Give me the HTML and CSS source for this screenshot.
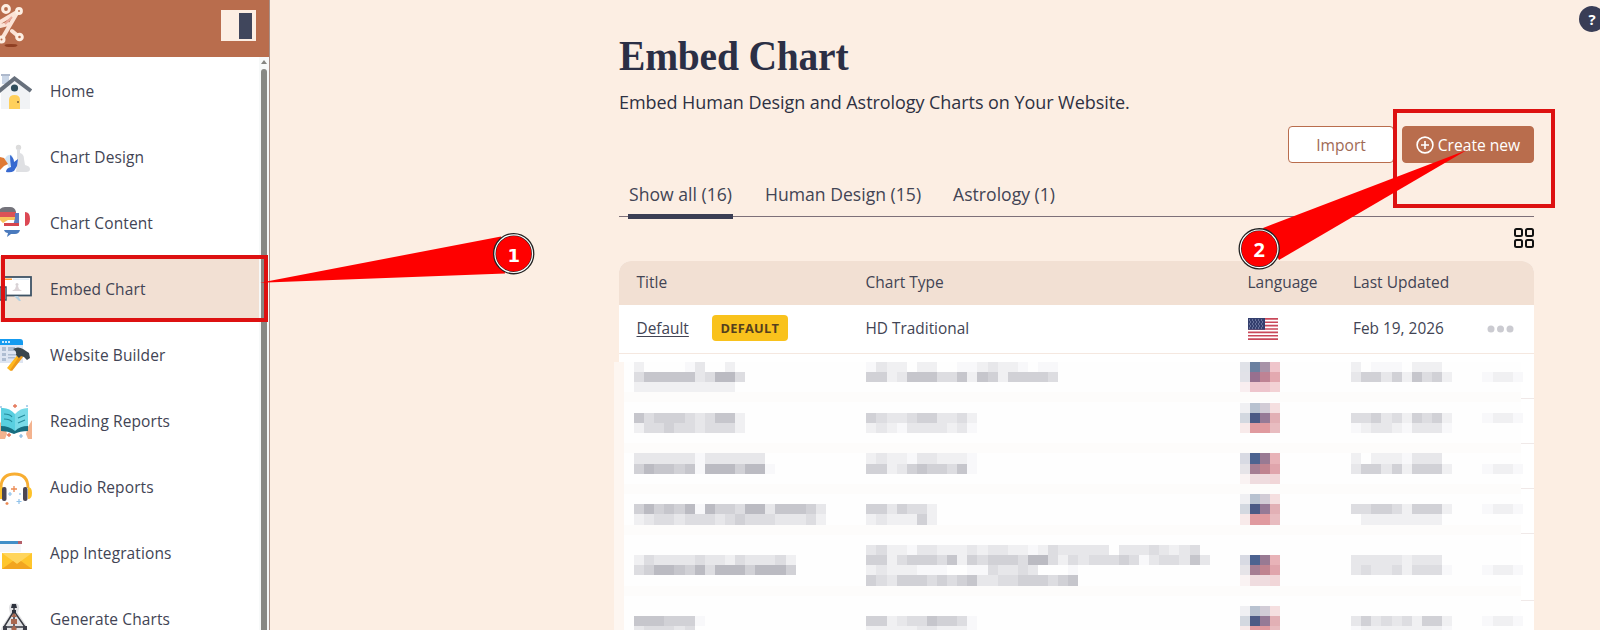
FILE: index.html
```html
<!DOCTYPE html>
<html lang="en">
<head>
<meta charset="utf-8">
<title>Embed Chart</title>
<link rel="stylesheet" href="styles.css">
</head>
<body>
<div class="app">
  <aside class="sidebar">
    <div class="brand">
      <svg class="logo" viewBox="0 0 26 50" width="26" height="50">
        <ellipse cx="11" cy="45.500" rx="6.500" ry="1.600" fill="#8f3f22"/>
        <g stroke="#fbe3d6" stroke-width="4" fill="none" stroke-linecap="round"><path d="M17 13L3 37M17 12L0 22M0 26L8 24M12 31L18 36"/></g>
        <g stroke="#fdeee2" stroke-width="3" fill="#b96d4d"><circle cx="6" cy="9" r="3.400"/><circle cx="19" cy="11" r="2.400"/><circle cx="19.500" cy="37" r="2.800"/><circle cx="1.500" cy="39.500" r="2.500"/></g>
        <path d="M5 24l7-7" stroke="#eba99b" stroke-width="2"/>
      </svg>
      <span class="toggle"><span class="toggle-pane"></span></span>
    </div>
    <div class="side-body">
      <nav class="menu">
        <a class="item"><svg viewBox="0 0 32 36" width="32" height="36"><path d="M1 1h9v2H1z" fill="#aeb9cc"/><path d="M2 3h7v8H2z" fill="#c9d5e6"/><path d="M1 17L15 5l15 13v18H1z" fill="#f1f3f5"/><path d="M-2 19L14.500 5.500 31 18" stroke="#67707c" stroke-width="4" fill="none"/><circle cx="14.500" cy="15" r="3.600" fill="#304e5c"/><path d="M9 36V27q0-5 5.500-5t5.500 5v9z" fill="#ffd05b"/><circle cx="18" cy="29" r="1" fill="#7a5a33"/></svg><span>Home</span></a>
        <a class="item"><svg viewBox="0 0 32 36" width="32" height="36"><circle cx="18.500" cy="8.500" r="2.700" fill="#dcdcdc"/><path d="M17 10h3v4q4 1 4 6l1 6q5 1 5 4 0 3-4 3H16l1-9z" fill="#dfe0e3"/><path d="M5 20q2-5 7-4l2 7-5 6z" fill="#d3e6f7"/><path d="M0 18l4 1 4 6-4 2-4 4z" fill="#df7a35"/><path d="M10 16q4 3 4 7l4-3-1 7-3 5q-3 2-8 1 0-4 5-5-1-7-1-12z" fill="#3769d0"/></svg><span>Chart Design</span></a>
        <a class="item"><svg viewBox="0 0 32 36" width="32" height="36"><path d="M0 4q2-2 5-2h5q5 0 6 5v1H0z" fill="#74737b"/><path d="M0 7h16v5H0z" fill="#dc5256"/><path d="M0 12h15v3H8l-5 3-3-3z" fill="#f9c35c"/><path d="M15 8h4v13h-6l2-8z" fill="#5d7cc0"/><path d="M25 7q5 0 5 7t-5 7z" fill="#dc4854"/><path d="M4 18h15v3H4z" fill="#d6454e"/><path d="M4 25h16q-1 4-5 4h-4l-4 3 1-4q-3 0-4-3z" fill="#4a7abd"/></svg><span>Chart Content</span></a>
        <a class="item active"><svg viewBox="0 0 32 36" width="32" height="36"><rect x="2" y="6" width="29" height="18.500" fill="#fff" stroke="#3e5365" stroke-width="1.800"/><path d="M4 7.500h8v1.500H4z" fill="#ff9b38"/><path d="M13 7.500h16v1.500H13z" fill="#e3edf5"/><path d="M14 25h4l3 5h-2z" fill="#b4cfe0"/><circle cx="17" cy="13.500" r="1.500" fill="#d7d1d4"/><path d="M16 15h2l1 3 3 2H12l3-2z" fill="#dcd4d7"/><path d="M0 16h6v13H0z" fill="#fff" stroke="#3e5365" stroke-width="1.500"/></svg><span>Embed Chart</span></a>
        <a class="item"><svg viewBox="0 0 32 36" width="32" height="36"><path d="M0 2h20q3 0 3 3v3H0z" fill="#159bf0"/><path d="M2 4h2v2H2zM5 4h2v2H5zM8 4h2v2H8z" fill="#cceaff"/><path d="M0 8h23v18H0z" fill="#dee5f2"/><path d="M2 10h4v4H2zM8 10h7v4H8zM2 16h4v3H2zM2 21h4v3H2zM8 17h8v1.500H8zM8 20h7v1.500H8z" fill="#aebdd2"/><path d="M19 16l4 3L10.500 34 7 31z" fill="#ffb81f"/><path d="M20 18l3 2L12 34l-2-1z" fill="#ed9918"/><path d="M13 12q5-3 10 0l6 4 1 5-3 2-3-3-3-1-2 2-3-3q1-4-3-6z" fill="#38454c"/></svg><span>Website Builder</span></a>
        <a class="item"><svg viewBox="0 0 32 36" width="32" height="36"><path d="M0 19l5 5 2 7-2 5H0zM32 17l-4 7-2 7 2 5h4z" fill="#f3b38f"/><path d="M1 8l13 4 14-4v20q-8 0-14 3-6-3-13-3z" fill="#176d80"/><path d="M1 5q8-1 14 6v17q-6-5-14-5z" fill="#59cfe0"/><path d="M15 11q5-6 13-6v18q-8 0-13 5z" fill="#79dae8"/><path d="M4 11q6 0 8 3M4 16q6 0 8 3M18 15l7-3M18 20l7-3" stroke="#258b9c" stroke-width="1.200" fill="none"/><path d="M15 1v4M13 3h4M9 30v4M7 32h4" stroke="#e47355" stroke-width="1.300"/><path d="M21 31v4M19 33h4M1 3v2M27 2v2" stroke="#7eb4df" stroke-width="1.200"/></svg><span>Reading Reports</span></a>
        <a class="item"><svg viewBox="0 0 32 36" width="32" height="36"><path d="M1 19q0-14 13.500-14T28 19" stroke="#f8ae32" stroke-width="2.800" fill="none"/><path d="M0 18q-3 6 0 12h3V18zM28 18q4 0 4 6t-4 6z" fill="#fec229"/><rect x="2" y="18" width="4.500" height="14" rx="2" fill="#4b4654"/><rect x="23" y="18" width="4.500" height="14" rx="2" fill="#4b4654"/><path d="M14 17v6M11 20h6M7 33v3M5.500 34.500h3" stroke="#ec8952" stroke-width="1.300"/><path d="M19 30v5M16.500 32.500h5M10 23v4M8 25h4M20 24v2" stroke="#8fc1ea" stroke-width="1.200"/></svg><span>Audio Reports</span></a>
        <a class="item"><svg viewBox="0 0 32 36" width="32" height="36"><path d="M0 6h21v11H0z" fill="#f5f6fa"/><path d="M0 6h18v3H0z" fill="#418fc8"/><path d="M18 6h4v3h-4z" fill="#b4606a"/><path d="M2 18h30v16H2z" fill="#ffc62c"/><path d="M2 18h30L17 29z" fill="#ffd55d"/><path d="M2 34l11-8 4 3 4-3 11 8z" fill="#f2a51f"/></svg><span>App Integrations</span></a>
        <a class="item"><svg viewBox="0 0 32 36" width="32" height="36"><path d="M14 2q6 0 5 6l-1 4 8 12q3 7 0 12H2q-3-7 1-12l7-11-1-6q0-5 5-5z" fill="#e2e2e4"/><path d="M14 10L4 26h21zM14 5v30M4 26l5 10M25 26l-5 10" stroke="#363941" stroke-width="1.500" fill="none"/><path d="M12 3h4l1 4h-6zM12 9h4v3h-4z" fill="#2e323d"/><path d="M14 12l3 4h-6zM11 18h6v5h-6zM14 24l3 4-3 3-3-3z" fill="#a96850"/><path d="M3 25h4v4H3zM23 25h4v4h-4z" fill="#3c3e49"/></svg><span>Generate Charts</span></a>
      </nav>
      <div class="scroll"><span class="scroll-up"></span><span class="thumb"></span></div>
    </div>
  </aside>
  <main class="main">
    <h1>Embed Chart</h1>
    <p class="lead">Embed Human Design and Astrology Charts on Your Website.</p>
    <div class="actions">
      <button class="btn import">Import</button>
      <button class="btn create"><svg viewBox="0 0 18 18" width="18" height="18" fill="none" stroke="#fff" stroke-width="1.600"><circle cx="9" cy="9" r="7.900"/><path d="M9 5v8M5 9h8"/></svg><span>Create new</span></button>
    </div>
    <div class="tabs"><a class="tab on"><span>Show all (16)</span></a><a class="tab"><span>Human Design (15)</span></a><a class="tab"><span>Astrology (1)</span></a></div>
    <div class="view">
      <svg viewBox="0 0 20 20" width="20" height="20" fill="none" stroke="#111" stroke-width="2"><rect x="1" y="1" width="7" height="7" rx="1.500"/><rect x="12" y="1" width="7" height="7" rx="1.500"/><rect x="1" y="12" width="7" height="7" rx="1.500"/><rect x="12" y="12" width="7" height="7" rx="1.500"/></svg>
    </div>
    <div class="table">
      <div class="row head"><span>Title</span><span>Chart Type</span><span>Language</span><span>Last Updated</span></div>
      <div class="row first">
        <span class="name"><a class="link">Default</a><b class="badge">DEFAULT</b></span>
        <span>HD Traditional</span>
        <svg class="flag" viewBox="0 0 30 22" width="30" height="22"><path fill="#fff" d="M0 0h30v22H0z"/><path d="M0 .85h30M0 4.230h30M0 7.620h30M0 11h30M0 14.380h30M0 17.770h30M0 21.150h30" stroke="#c9485a" stroke-width="1.700"/><path fill="#343f6e" d="M0 0h17v11.800H0z"/><path d="M1 2h15M2 4h14M1 6h15M2 8h14M1 10h15" stroke="#9aa6c8" stroke-width="1" stroke-dasharray="1 2"/></svg>
        <span>Feb 19, 2026</span>
        <svg class="more" viewBox="0 0 27 8" width="27" height="8" fill="#cbcbd1"><circle cx="4" cy="4" r="3.500"/><circle cx="13.500" cy="4" r="3.500"/><circle cx="23" cy="4" r="3.500"/></svg>
      </div>
      <div class="row blank"></div><div class="row blank"></div><div class="row blank"></div><div class="row blank"></div><div class="row blank tall"></div><div class="row blank"></div>
    </div>
  </main>
</div>
<svg class="mosaic" width="1600" height="630" viewBox="0 0 1600 630" shape-rendering="crispEdges"></svg>
<span class="help">?</span>
<svg class="notes" width="1600" height="630" viewBox="0 0 1600 630">
  <g fill="none" stroke="#dd1111" stroke-width="4"><rect x="3" y="257" width="263" height="63"/><rect x="1395" y="111" width="158" height="95"/></g>
  <g fill="#fe0000"><path d="M260 282.700L501 236.500L505 273.500z"/><path d="M1467 150L1263 228L1279 260z"/></g>
  <g stroke="#222" stroke-width="3"><circle cx="513.700" cy="253.700" r="19.200" fill="#f00"/><circle cx="1259.200" cy="248.800" r="19.200" fill="#f00"/></g>
  <g stroke="#fff" stroke-width="1.200" fill="none"><circle cx="513.700" cy="253.700" r="18.800"/><circle cx="1259.200" cy="248.800" r="18.800"/></g>
  <g class="num" text-anchor="middle"><text class="one" x="513.700" y="261.500">1</text><text x="1259.200" y="256.700">2</text></g>
</svg>
<script src="script.js"></script>
</body>
</html>
```
FILE: styles.css
```css
* { box-sizing: border-box; }
body { margin: 0; width: 1600px; height: 630px; overflow: hidden; position: relative; background: #fceee3; font-family: "Open Sans", "Noto Sans", sans-serif; font-size: 15px; color: #424454; }
.app { display: flex; height: 630px; overflow: hidden; }
.sidebar { width: 270px; flex: none; background: #fff; border-right: 1px solid #a89088; display: flex; flex-direction: column; }
.brand { height: 57px; flex: none; background: #b96d4d; display: flex; justify-content: space-between; align-items: flex-start; padding-right: 13px; }
.toggle { width: 35px; height: 31px; margin-top: 10px; background: #fceee3; display: flex; justify-content: flex-end; padding: 3px 4px 2px 0; }
.toggle-pane { width: 13px; background: #40465c; }
.side-body { display: flex; flex: 1; min-height: 0; }
.menu { flex: 1; padding-top: 1px; overflow: hidden; }
.item { height: 66px; display: flex; align-items: center; gap: 18px; letter-spacing: .1px; font-size: 15.500px; }
.item svg { flex: none; }
.active { background: #f2e0d3; }
.scroll { width: 10px; background: #f7f9f9; display: flex; flex-direction: column; align-items: center; padding-top: 3px; }
.scroll-up { border: 3px solid transparent; border-top: 0; border-bottom: 4px solid #858581; margin-bottom: 5px; }
.thumb { width: 6px; flex: 1; background: #888884; border-radius: 3px 3px 0 0; }
.main { width: 915px; margin-left: 349px; flex: none; }
h1 { margin: 31px 0 0; font: 700 42px/50px "Liberation Serif", serif; letter-spacing: -.2px; transform: scaleX(.94); transform-origin: left; color: #2b2f45; }
.lead { margin: 9px 0 0; line-height: 24px; font-size: 18px; letter-spacing: -.060px; color: #2e3142; white-space: nowrap; }
.actions { display: flex; justify-content: flex-end; gap: 8px; margin-top: 12px; }
.btn { height: 37px; border: 1px solid #b96d4d; border-radius: 4px; font: inherit; font-size: 15.600px; padding: 0; display: flex; align-items: center; justify-content: center; gap: 4px; }
.import { width: 106px; background: #fff; color: #a06a55; }
.create { width: 132px; background: #b96d4d; color: #fff; }
.tabs { height: 54px; display: flex; align-items: flex-end; gap: 32px; padding-left: 9px; border-bottom: 1px solid #7d7079; font-size: 17.600px; }
.tab { height: 41px; line-height: 39px; white-space: nowrap; }
.on { border-bottom: 5px solid #3b3e54; margin-bottom: -3px; height: 44px; width: 105px; flex: none; padding-left: 1px; }
.view { height: 44px; display: flex; justify-content: flex-end; padding-top: 11px; }
.table { background: #fff; border-radius: 12px 12px 0 0; overflow: hidden; }
.row { display: grid; grid-template-columns: 229px 382px 105.500px 134px 1fr; padding-left: 17.500px; align-items: center; height: 45px; border-bottom: 1px solid #f0e9e8; }
.head { height: 44px; background: #f2e0d3; border: 0; font-size: 15.500px; padding-bottom: 2px; }
.first { height: 49px; padding-bottom: 1px; border-color: #f5e8e0; font-size: 15.400px; }
.first > span { margin-top: -1px; }
.tall { height: 67px; }
.name { display: flex; align-items: center; gap: 23px; }
.link { text-decoration: underline; text-underline-offset: 2px; }
.badge { width: 76px; height: 26px; line-height: 26px; background: #f9c21c; color: #553f1e; border-radius: 4px; text-align: center; font-size: 12.800px; letter-spacing: .3px; }
.mosaic, .notes { position: absolute; left: 0; top: 0; }
.help { position: absolute; left: 1579px; top: 6px; width: 26px; height: 26px; border-radius: 50%; background: #393d56; color: #fff; font-weight: 700; font-size: 15px; line-height: 26px; text-align: center; }
.num { fill: #fff; font-weight: 700; font-size: 20px; }
.one { font-family: "DejaVu Sans", sans-serif; font-size: 18px; }
```
FILE: script.js
```js
// Pixelation mask over the private rows: [grid row, grid column, shades]
const cells = [
  [0,0,"2....13..2"],[1,0,"46666634774"],[2,0,"2222222222"],
  [5,0,"64555434662"],[6,0,"24454434442"],
  [9,0,"3333331333333"],[10,0,"57665617775771"],
  [14,0,"5756571755477366653"],[15,0,"2344344434544433342"],
  [19,0,"2433334332433342"],[20,0,"4577657477757775"],
  [25,0,"6665551"],[26,0,"344434."],
  [0,23,"1322.22..1123221.11"],[1,23,"5523666446265255554"],
  [5,23,"54334553342"],[6,23,"23213333231"],
  [9,23,"23221332221"],[10,23,"55235655461"],
  [14,23,"5535442"],[15,23,"2322252"],
  [18,23,"342213322232332212433333.33343234"],
  [19,23,"5524555462545554774243444541344363"],
  [20,23,"23222111..1143343...1"],[21,23,"543555454563344555456"],
  [25,23,"55234465541"],[26,23,"22222332221"],
  [0,71,"2.111.222."],[1,71,"3553526452"],[5,71,"4453425452"],[6,71,"1233213331"],
  [9,71,"2.2221333."],[10,71,"3553525552"],[14,71,"4455425552"],[15,71,".22222222."],
  [19,71,"333332333."],[20,71,"3433424441"],[25,71,"3534342552"],[26,71,"1222222221"],
  [1,84,"1221"],[5,84,"1221"],[10,84,"1221"],[14,84,"1221"],[20,84,"1221"],[25,84,"1221"]
];
const shades = ["#fff","#f8f8fa","#f0f0f2","#e7e7ea","#dddde1","#d1d1d6","#c6c6cc","#bbbbc2"];
const flagA = ["e0e2e8 6b80a0 a893a8 efc5cb","e2e2e8 98708f bf8394 e3a9b0","f9eef0 eec5cd eec5cd f3d2d5"];
const flagB = ["f0f0f3 b8c2d0 d2ccd6 f5dfe0","d3d8e0 4b5a85 967a96 e2b0b5","f8eaea e09a9f e09a9f e8bcc0"];
const flagC = ["d8dae3 4c6390 997a93 e8b3b8","e6e4e8 a57e93 c08490 e0a5ac","faf3f3 efdcdf efdcdf f1d6d8"];
const flags = [[0,flagA],[4,flagB],[9,flagC],[13,flagB],[19,flagC],[24,flagB]];
const px = c => Math.round(634 + c * 10.1);
const py = r => Math.round(362 + r * 10.16);
let out = '<rect x="614" y="362" width="10" height="268" fill="#fdf6f1"/><rect x="624" y="362" width="897" height="268" fill="#fefefe"/>';
for (const r of [3,8,12,16,22]) out += `<rect x="624" y="${py(r)}" width="897" height="10" fill="#fdfcfb"/>`;
const cell = (r, c, fill) => `<rect x="${px(c)}" y="${py(r)}" width="${px(c + 1) - px(c)}" height="${py(r + 1) - py(r)}" fill="${fill}"/>`;
for (const [r, c, s] of cells) [...s].forEach((v, i) => { if (v !== ".") out += cell(r, c + i, shades[+v]); });
for (const [r, f] of flags) f.forEach((line, j) => line.split(" ").forEach((v, i) => { out += cell(r + j, 60 + i, "#" + v); }));
document.querySelector(".mosaic").innerHTML = out;
```
